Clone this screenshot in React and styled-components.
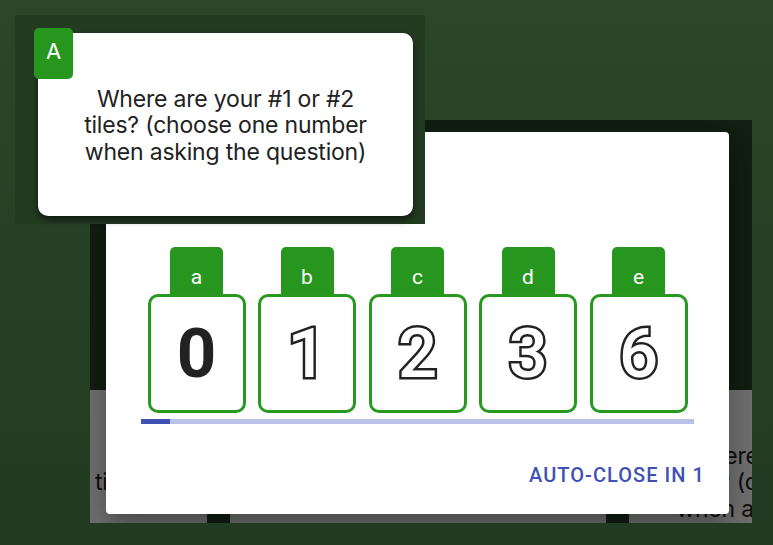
import React from "react";
import styled, { createGlobalStyle } from "styled-components";

const Global = createGlobalStyle`
  html, body { margin: 0; padding: 0; }
  body { width: 773px; height: 545px; overflow: hidden; font-family: Roboto, "Liberation Sans", sans-serif; }
`;

const Page = styled.div`
  position: relative;
  width: 773px;
  height: 545px;
  overflow: hidden;
  background: linear-gradient(180deg, #2c4629 0%, #223a21 100%);
`;

/* the app screen behind the modal */
const Screen = styled.div`
  position: absolute;
  left: 90px;
  top: 120px;
  width: 662px;
  height: 403px;
  overflow: hidden;
`;

const Underlay = styled.div`
  display: flex;
  flex-direction: column;
  background: #2b4529;
  height: 100%;
`;

const ScreenHeader = styled.div`
  height: 270px;
  flex: none;
`;

const CardRow = styled.div`
  display: grid;
  grid-template-columns: 117px 376px 376px;
  column-gap: 23px;
`;

const BgCard = styled.div`
  height: 183px;
  background: #fff;
  display: flex;
  align-items: center;
  justify-content: ${(p) => (p.$align === "left" ? "flex-start" : "center")};
  padding-left: ${(p) => (p.$align === "left" ? "5px" : "0")};
  padding-top: 2px;
  box-sizing: border-box;
  overflow: hidden;
`;

const QuestionText = styled.div`
  font-family: Inter, "Noto Sans", sans-serif;
  font-size: 23px;
  line-height: 26.5px;
  color: #222;
  text-align: ${(p) => (p.$align === "left" ? "left" : "center")};
  white-space: nowrap;
  letter-spacing: -0.2px;
`;

const Backdrop = styled.div`
  position: absolute;
  inset: 0;
  background: rgba(0, 0, 0, 0.55);
  display: flex;
  padding: 12px 23px 9px 16px;
`;

const Dialog = styled.div`
  flex: 1;
  background: #fff;
  border-radius: 4px;
  display: flex;
  flex-direction: column;
  box-shadow: 0 11px 15px -7px rgba(0, 0, 0, 0.2),
    0 24px 38px 3px rgba(0, 0, 0, 0.14), 0 9px 46px 8px rgba(0, 0, 0, 0.12);
`;

const DialogContent = styled.div`
  padding: 115px 35px 0 35px;
  display: flex;
  flex-direction: column;
`;

const TileRow = styled.div`
  display: flex;
  justify-content: center;
  gap: 12.5px;
`;

const TileColumn = styled.div`
  display: flex;
  flex-direction: column;
  align-items: center;
`;

const TileLabel = styled.div`
  width: 53px;
  height: 50px;
  margin-bottom: -3px;
  box-sizing: border-box;
  padding-top: 9px;
  background: #26961f;
  border-radius: 5px 5px 0 0;
  color: #fff;
  font-family: Roboto, sans-serif;
  font-size: 21px;
  display: flex;
  align-items: center;
  justify-content: center;
`;

const Tile = styled.div`
  width: 98px;
  height: 119px;
  box-sizing: border-box;
  border: 3px solid #28991f;
  border-radius: 10px;
  background: #fff;
  display: flex;
  align-items: center;
  justify-content: center;
  font-family: Roboto, sans-serif;
  font-size: 69px;
  line-height: 1;
  font-weight: ${(p) => (p.$selected ? 700 : 500)};
  color: ${(p) => (p.$selected ? "#222" : "#fff")};
  -webkit-text-stroke: ${(p) => (p.$selected ? "0" : "5px #222")};
  paint-order: stroke fill;
`;

const Progress = styled.div`
  margin-top: 6px;
  height: 5px;
  background: #b9c1e7;
`;

const ProgressFill = styled.div`
  height: 100%;
  background: #3f51b5;
`;

const DialogActions = styled.div`
  margin-top: auto;
  display: flex;
  justify-content: flex-end;
  padding: 0 24px 27px 0;
`;

const CloseButton = styled.div`
  font-family: Roboto, sans-serif;
  font-weight: 500;
  font-size: 20px;
  line-height: 24px;
  letter-spacing: 1.05px;
  text-transform: uppercase;
  color: #3f51b5;
`;

/* floating question card panel */
const QuestionPanel = styled.div`
  position: absolute;
  left: 15px;
  top: 15px;
  width: 410px;
  height: 209px;
  box-sizing: border-box;
  padding: 18px 12px 8px 23px;
  background: #233b21;
`;

const QuestionCard = styled.div`
  position: relative;
  width: 375px;
  height: 183px;
  background: #fff;
  border-radius: 10px;
  box-shadow: 0 4px 7px rgba(0, 0, 0, 0.55);
  display: flex;
  align-items: center;
  justify-content: center;
  padding-top: 2px;
  box-sizing: border-box;
`;

const Badge = styled.div`
  position: absolute;
  left: -4px;
  top: -5px;
  width: 39px;
  height: 51px;
  border-radius: 5px;
  background: #26961f;
  color: #fff;
  font-family: Inter, "Noto Sans", sans-serif;
  font-size: 22px;
  display: flex;
  justify-content: center;
  padding-top: 10px;
  box-sizing: border-box;
`;

const tiles = [
  { label: "a", value: "0", selected: true },
  { label: "b", value: "1" },
  { label: "c", value: "2" },
  { label: "d", value: "3" },
  { label: "e", value: "6" },
];

const Question = () => (
  <QuestionText>
    Where are your #1 or #2
    <br />
    tiles? (choose one number
    <br />
    when asking the question)
  </QuestionText>
);

export default function App() {
  return (
    <>
      <Global />
      <Page>
        <Screen>
          <Underlay>
            <ScreenHeader />
            <CardRow>
              <BgCard $align="left">
                <QuestionText $align="left">tiles? (choose one number</QuestionText>
              </BgCard>
              <BgCard />
              <BgCard>
                <Question />
              </BgCard>
            </CardRow>
          </Underlay>
          <Backdrop>
            <Dialog>
              <DialogContent>
                <TileRow>
                  {tiles.map((t) => (
                    <TileColumn key={t.label}>
                      <TileLabel>{t.label}</TileLabel>
                      <Tile $selected={t.selected}>{t.value}</Tile>
                    </TileColumn>
                  ))}
                </TileRow>
                <Progress>
                  <ProgressFill style={{ width: "29px" }} />
                </Progress>
              </DialogContent>
              <DialogActions>
                <CloseButton>Auto-close in 1</CloseButton>
              </DialogActions>
            </Dialog>
          </Backdrop>
        </Screen>
        <QuestionPanel>
          <QuestionCard>
            <Badge>A</Badge>
            <Question />
          </QuestionCard>
        </QuestionPanel>
      </Page>
    </>
  );
}
